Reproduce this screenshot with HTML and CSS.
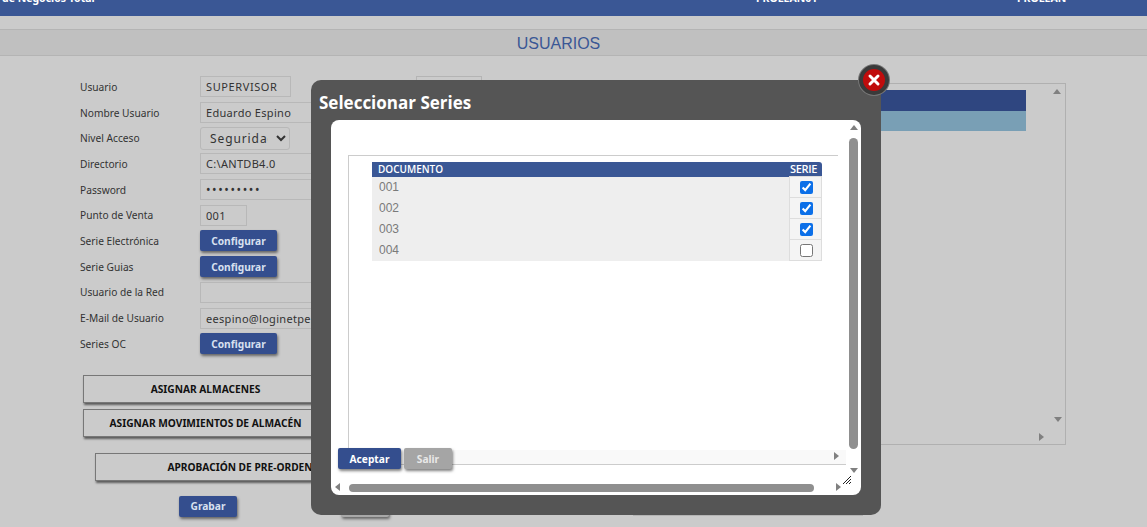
FILE: index.html
```html
<!DOCTYPE html>
<html lang="es">
<head>
  <meta charset="UTF-8">
  <title>Usuarios</title>
  <link rel="stylesheet" href="styles.css">
</head>
<body>
  <header class="topbar">
    <span class="topbar-text topbar-left">de Negocios Total</span>
    <span class="topbar-text topbar-mid">PROLEAN01</span>
    <span class="topbar-text topbar-right">PROLEAN</span>
  </header>
  <h1 class="title">USUARIOS</h1>

  <main class="content">
    <section class="form-col">
      <div class="form">
        <label>Usuario</label>
        <div class="field-row">
          <input class="input input-short" type="text" value="SUPERVISOR">
          <span class="ghost-box"></span>
        </div>
        <label>Nombre Usuario</label>
        <input class="input input-long" type="text" value="Eduardo Espino">
        <label>Nivel Acceso</label>
        <select class="select"><option>Seguridad</option></select>
        <label>Directorio</label>
        <input class="input input-long" type="text" value="C:\ANTDB4.0">
        <label>Password</label>
        <input class="input input-long input-pass" type="password" value="123456789">
        <label>Punto de Venta</label>
        <input class="input input-pv" type="text" value="001">
        <label>Serie Electrónica</label>
        <button class="btn btn-blue btn-config">Configurar</button>
        <label>Serie Guias</label>
        <button class="btn btn-blue btn-config">Configurar</button>
        <label>Usuario de la Red</label>
        <input class="input input-long" type="text">
        <label>E-Mail de Usuario</label>
        <input class="input input-long" type="text" value="eespino@loginetperu.com">
        <label>Series OC</label>
        <button class="btn btn-blue btn-config">Configurar</button>
      </div>
      <div class="big-buttons">
        <button class="btn-big">ASIGNAR ALMACENES</button>
        <button class="btn-big">ASIGNAR MOVIMIENTOS DE ALMACÉN</button>
        <button class="btn-big btn-big-pre">APROBACIÓN DE PRE-ORDEN</button>
      </div>
      <div class="save-row">
        <button class="btn btn-blue btn-save">Grabar</button>
        <button class="btn btn-back">Salir</button>
      </div>
    </section>

    <section class="right-col">
      <div class="list-panel">
        <div class="list-bars">
          <div class="list-bar list-bar-dark"></div>
          <div class="list-bar list-bar-light"></div>
        </div>
        <span class="arrow arrow-up panel-up"></span>
        <span class="arrow arrow-down panel-down"></span>
        <span class="arrow arrow-right panel-right"></span>
      </div>
      <div class="bottom-box"></div>
    </section>
  </main>

  <div class="modal">
    <h2 class="modal-title">Seleccionar Series</h2>
    <a class="modal-close">
      <svg viewBox="0 0 14 14" width="14" height="14">
        <path d="M3 3 L11 11 M11 3 L3 11" stroke="#fff" stroke-width="3" stroke-linecap="round"/>
      </svg>
    </a>
    <div class="modal-body">
      <div class="inner-box">
        <table class="series">
          <thead>
            <tr><th class="col-doc">DOCUMENTO</th><th class="col-serie">SERIE</th></tr>
          </thead>
          <tbody>
            <tr><td>001</td><td class="cell-check"><input type="checkbox" checked></td></tr>
            <tr><td>002</td><td class="cell-check"><input type="checkbox" checked></td></tr>
            <tr><td>003</td><td class="cell-check"><input type="checkbox" checked></td></tr>
            <tr><td>004</td><td class="cell-check"><input type="checkbox"></td></tr>
          </tbody>
        </table>
      </div>
      <div class="inner-track"></div>
      <div class="inner-line"></div>
      <span class="arrow arrow-right inner-right"></span>
      <div class="modal-actions">
        <button class="btn btn-blue btn-accept">Aceptar</button>
        <button class="btn btn-gray">Salir</button>
      </div>
      <span class="arrow arrow-up body-up"></span>
      <div class="thumb-v"></div>
      <span class="arrow arrow-down body-down"></span>
      <span class="arrow arrow-left body-left"></span>
      <div class="thumb-h"></div>
      <span class="arrow arrow-right body-right"></span>
      <svg class="grip" viewBox="0 0 8 8" width="8" height="8">
        <path d="M0 8 L8 0 M3 8 L8 3 M6 8 L8 6" stroke="#222" stroke-width="1"/>
      </svg>
    </div>
  </div>
</body>
</html>
```

FILE: styles.css
```css
body {
  margin: 0;
  height: 527px;
  overflow: hidden;
  position: relative;
  background-color: #cbcbcb;
  font-family: Tahoma, "Noto Sans", sans-serif;
  font-size: 11px;
  color: #333333;
}
.topbar {
  height: 16px;
  background-color: #3a5795;
  position: relative;
  overflow: hidden;
}
.topbar-text {
  position: absolute;
  top: -9px;
  font-size: 10.5px;
  font-weight: bold;
  line-height: 14px;
  color: #ffffff;
}
.topbar-left { left: 2px; }
.topbar-mid { left: 756px; }
.topbar-right { left: 1017px; }
.title {
  margin: 13px 0 0;
  padding-right: 30px;
  height: 25px;
  background-color: #c0c0c0;
  border-top: 1px solid #b4b4b4;
  border-bottom: 1px solid #b4b4b4;
  font-family: "Liberation Sans", Arial, sans-serif;
  font-size: 16px;
  font-weight: normal;
  line-height: 27px;
  text-align: center;
  color: #3a5795;
}
.content {
  display: flex;
  padding: 18px 0 0 80px;
}
.form-col {
  width: 553px;
  flex-shrink: 0;
}
.form {
  display: grid;
  grid-template-columns: 120px 1fr;
  grid-auto-rows: 25.7px;
  align-items: center;
}
.form label {
  font-size: 10.2px;
  color: #333333;
}
.field-row {
  display: flex;
  justify-content: space-between;
  align-items: center;
}
.ghost-box {
  width: 64px;
  height: 20px;
  margin-right: 151px;
  border: 1px solid #b4b4b4;
}
.input, .select {
  box-sizing: border-box;
  height: 21px;
  padding: 0 5px;
  border: 1px solid #b8b8b8;
  background-color: #cbcbcb;
  font-family: Tahoma, "Noto Sans", sans-serif;
  font-size: 11px;
  letter-spacing: 0.3px;
  color: #333333;
}
.input-short {
  width: 91px;
  letter-spacing: 0.6px;
}
.input-pv { width: 47px; }
.input-long { width: 200px; }
.input-pass {
  font-size: 12px;
  letter-spacing: 1.6px;
}
.select {
  width: 90px;
  height: 23px;
  border-radius: 3px;
  padding: 0 5px;
  font-size: 12px;
  letter-spacing: 0.9px;
}
.btn {
  border: none;
  border-radius: 2px;
  padding: 0;
  font-family: Tahoma, "Noto Sans", sans-serif;
  font-size: 10.2px;
  font-weight: bold;
  box-shadow: 1px 2px 3px rgba(0, 0, 0, 0.5);
}
.btn-blue {
  background-color: #344e8e;
  color: #d8e0f0;
}
.btn-config {
  width: 77px;
  height: 21px;
}
.big-buttons {
  display: flex;
  flex-direction: column;
  gap: 6px;
  margin-top: 18px;
  padding-left: 3px;
}
.btn-big {
  width: 245px;
  height: 28px;
  border: 1px solid #777777;
  background-color: #cbcbcb;
  box-shadow: 1px 2px 2px rgba(0, 0, 0, 0.55);
  font-family: Tahoma, "Noto Sans", sans-serif;
  font-size: 10.2px;
  font-weight: bold;
  color: #111111;
}
.btn-big-pre {
  width: 290px;
  margin: 10px 0 0 12px;
}
.save-row {
  display: flex;
  gap: 104px;
  margin: 15px 0 0 99px;
}
.btn-save {
  width: 58px;
  height: 21px;
}
.btn-back {
  width: 48px;
  height: 21px;
  background-color: #a8a8a8;
}
.right-col {
  flex: 0 0 433px;
}
.list-panel {
  box-sizing: border-box;
  position: relative;
  height: 362px;
  margin-top: 9px;
  border: 1px solid #b0b0b0;
  padding: 6px 39px 0 0;
}
.list-bar {
  height: 20.5px;
}
.list-bar-dark { background-color: #2f4680; }
.list-bar-light { background-color: #799fb5; }
.bottom-box {
  height: 40px;
  margin-top: 30px;
  width: 230px;
  border-bottom: 1px solid #b4b4b4;
}
.arrow {
  position: absolute;
  width: 0;
  height: 0;
  border-style: solid;
  border-color: transparent;
}
.arrow-up {
  border-width: 0 4px 5px;
  border-bottom-color: #808080;
}
.arrow-down {
  border-width: 5px 4px 0;
  border-top-color: #808080;
}
.arrow-left {
  border-width: 4px 5px 4px 0;
  border-right-color: #808080;
}
.arrow-right {
  border-width: 4px 0 4px 5px;
  border-left-color: #808080;
}
.panel-up { top: 5px; right: 4px; }
.panel-down { bottom: 22px; right: 3px; }
.panel-right { bottom: 3px; right: 21px; }
.modal {
  position: absolute;
  left: 311px;
  top: 80px;
  box-sizing: border-box;
  width: 570px;
  height: 435px;
  padding: 0 20px;
  background-color: #555555;
  border-radius: 10px;
}
.modal-title {
  margin: 0 0 0 -12px;
  height: 40px;
  font-family: "Open Sans", sans-serif;
  font-size: 17px;
  font-weight: bold;
  line-height: 45px;
  color: #ffffff;
}
.modal-close {
  position: absolute;
  top: -15px;
  right: -8px;
  box-sizing: border-box;
  width: 30px;
  height: 30px;
  display: flex;
  align-items: center;
  justify-content: center;
  background-color: #c00c0c;
  border: 4px solid #3a3a3a;
  border-radius: 50%;
  box-shadow: 0 0 0 1px #777777;
}
.modal-body {
  position: relative;
  height: 375px;
  background-color: #ffffff;
  border-radius: 8px;
}
.inner-box {
  position: absolute;
  left: 17px;
  top: 35px;
  width: 490px;
  height: 293px;
  border-top: 1px solid #cccccc;
  border-left: 1px solid #cccccc;
  padding: 6px 0 0 23px;
  box-sizing: border-box;
}
.series {
  width: 450px;
  border-collapse: collapse;
  table-layout: fixed;
  font-family: "Liberation Sans", Arial, sans-serif;
}
.series th {
  height: 14px;
  padding: 0 6px;
  background-color: #3a5795;
  color: #ffffff;
  font-family: "Open Sans", sans-serif;
  font-size: 10px;
  font-weight: 600;
  line-height: 14px;
  text-align: left;
}
.series th.col-serie {
  width: 28px;
  padding: 0 4px 0 0;
  font-size: 11px;
  letter-spacing: -0.3px;
  text-align: center;
  border-top-right-radius: 3px;
}
.series td {
  height: 20px;
  padding: 0 7px;
  background-color: #eeeeee;
  font-size: 12px;
  color: #7a7a7a;
}
.series td.cell-check {
  padding: 0 0 0 1px;
  background-color: #f4f4f4;
  text-align: center;
  border: 1px solid #dddddd;
}
.cell-check input {
  margin: 0;
  width: 13px;
  height: 13px;
  vertical-align: middle;
  accent-color: #0b6fe8;
}
.inner-track {
  position: absolute;
  left: 18px;
  top: 330px;
  width: 497px;
  height: 14px;
  background-color: #f9f9f9;
}
.inner-line {
  position: absolute;
  left: 17px;
  top: 344px;
  width: 498px;
  height: 1px;
  background-color: #cccccc;
}
.modal-actions {
  position: absolute;
  left: 7px;
  top: 328px;
  display: flex;
  gap: 3px;
}
.btn-accept {
  width: 63px;
  height: 21px;
  color: #ffffff;
}
.btn-gray {
  width: 48px;
  height: 21px;
  background-color: #a5a5a5;
  color: #e8e8e8;
}
.inner-right { left: 503px; top: 332px; }
.body-up { left: 519px; top: 5px; }
.thumb-v {
  position: absolute;
  left: 518px;
  top: 18px;
  width: 9px;
  height: 311px;
  background-color: #8f8f8f;
  border-radius: 5px;
}
.body-down { left: 519px; top: 348px; }
.body-left { left: 4px; top: 363px; }
.thumb-h {
  position: absolute;
  left: 18px;
  top: 364px;
  width: 465px;
  height: 8px;
  background-color: #8f8f8f;
  border-radius: 4px;
}
.body-right { left: 505px; top: 363px; }
.grip {
  position: absolute;
  left: 512px;
  top: 356px;
}
```
